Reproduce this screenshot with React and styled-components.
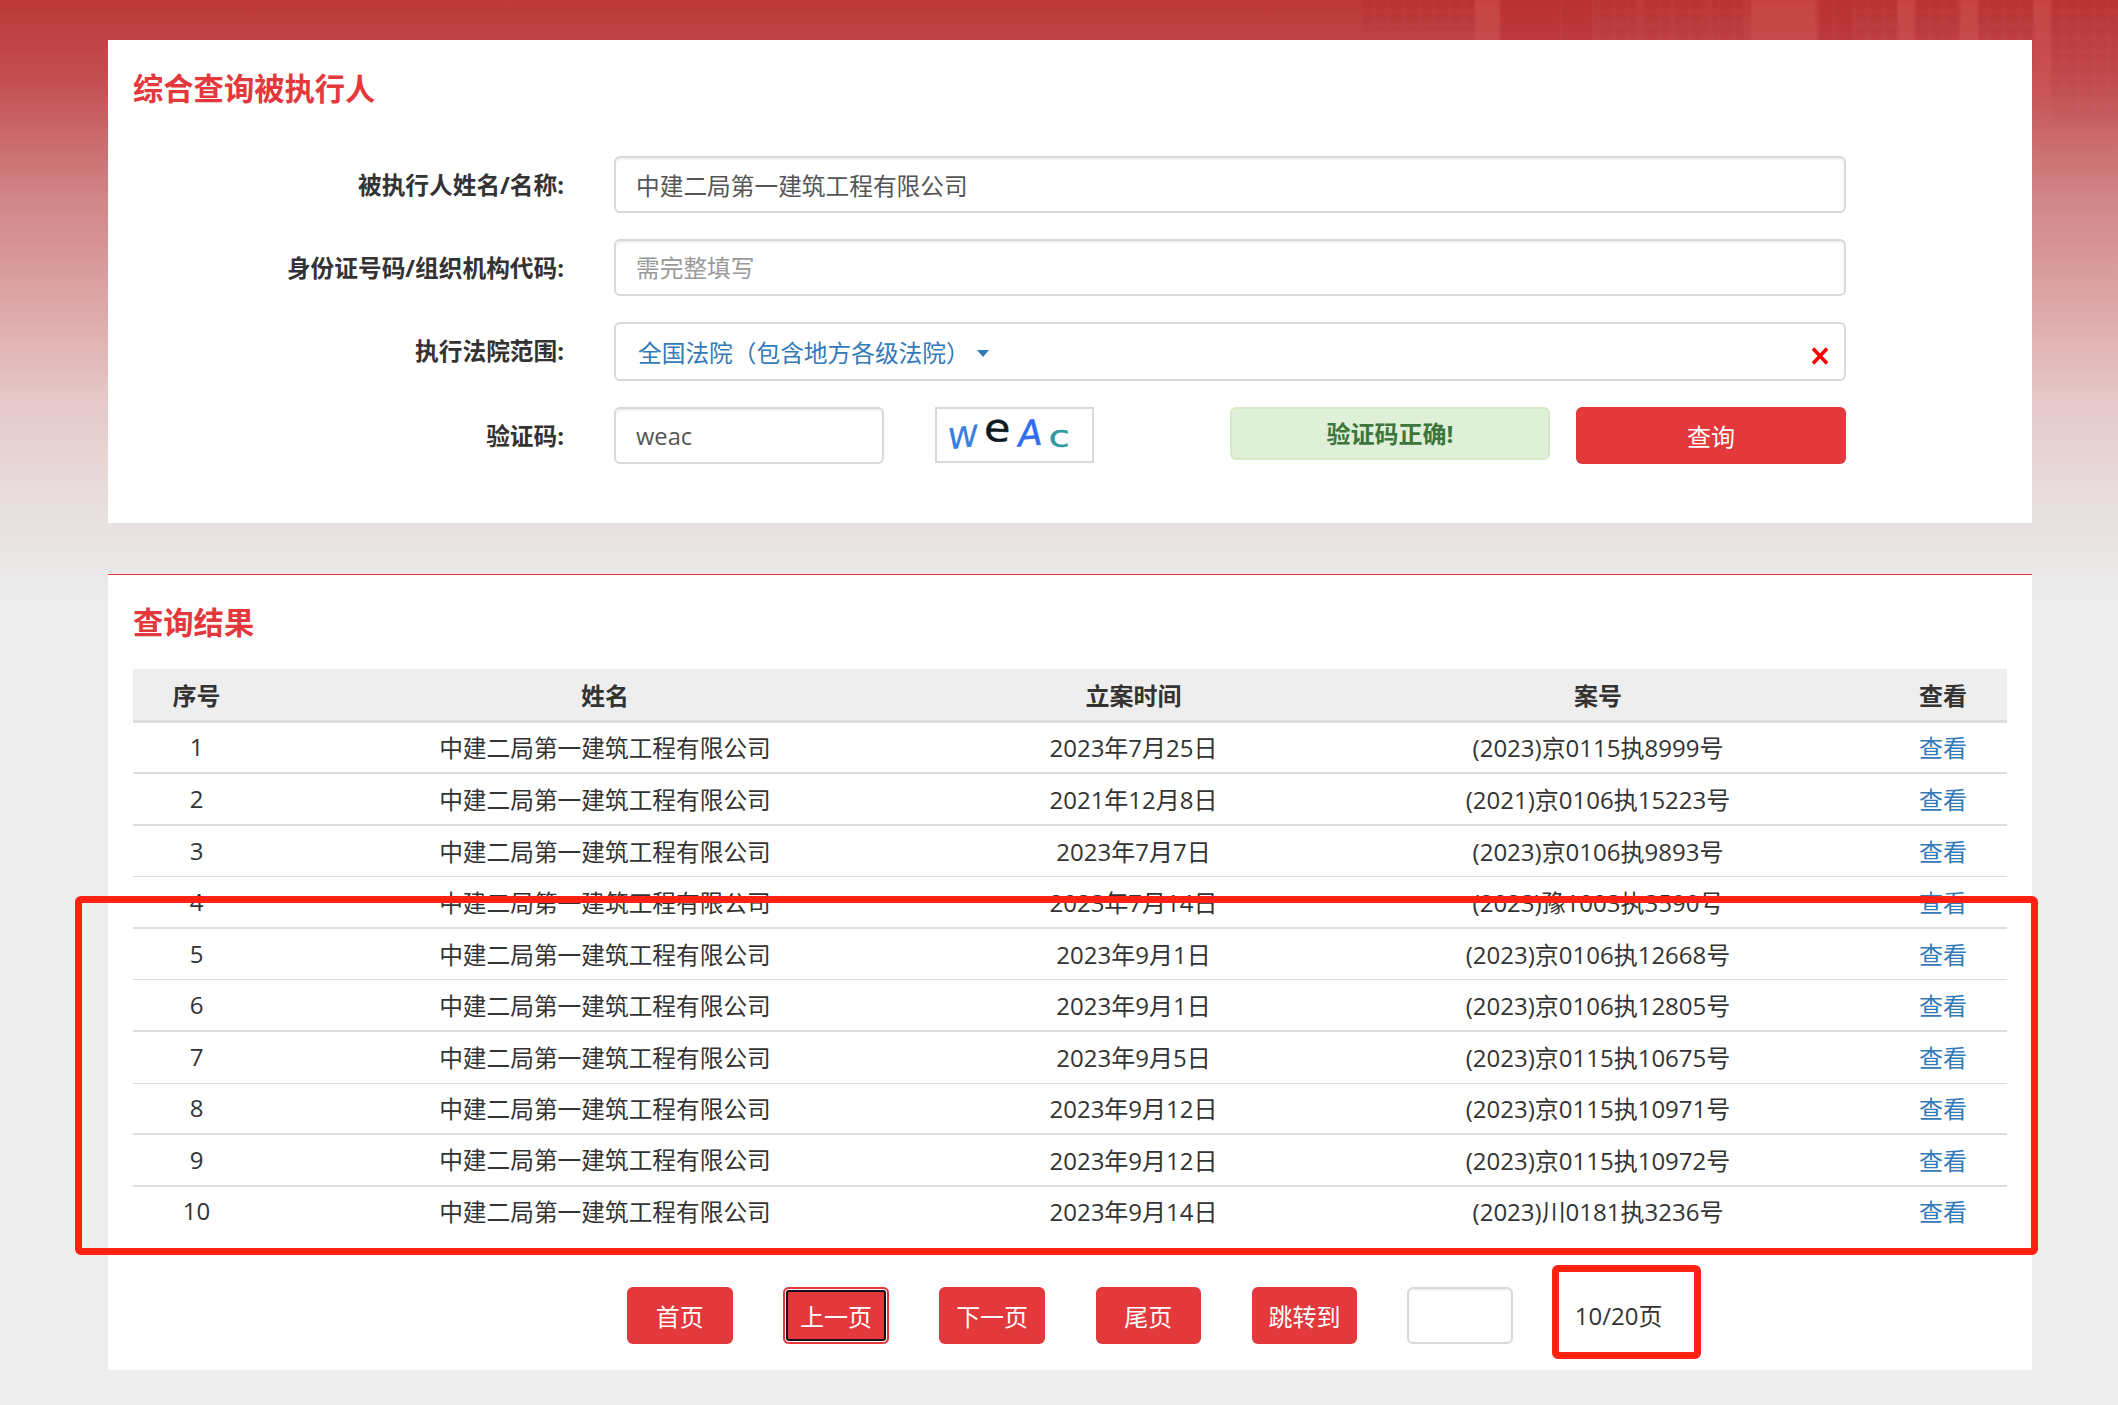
import React from "react";
import styled, { createGlobalStyle } from "styled-components";

const GlobalStyle = createGlobalStyle`
  html, body {
    margin: 0;
    padding: 0;
    background: #ededed;
  }
  * {
    box-sizing: border-box;
  }
`;

const Page = styled.div`
  position: relative;
  width: 2118px;
  height: 1405px;
  padding: 40px 86px 0 108px;
  overflow: hidden;
  font-family: "Open Sans", "Noto Sans CJK SC", sans-serif;
  font-size: 24px;
  color: #333;
  background: linear-gradient(
    180deg,
    #bd383a 0,
    #c44f51 80px,
    #d18689 200px,
    #dda5a6 300px,
    #e6c8c9 400px,
    #e8dddd 500px,
    #ececec 600px,
    #ededed 700px
  );
`;

const Building = styled.svg`
  position: absolute;
  top: 0;
  left: 1300px;
  filter: blur(1px);
`;

const Panel = styled.section`
  position: relative;
  width: 1924px;
  background: #fff;
`;

const SearchPanel = styled(Panel)`
  height: 483px;
  padding: 29px 25px 0;
`;

const ResultPanel = styled(Panel)`
  margin-top: 51px;
  height: 796px;
  padding: 28px 25px 0;
  border-top: 1px solid #e4393c;
`;

const Title = styled.h2`
  margin: 0;
  font-size: 30.3px;
  line-height: 40px;
  font-weight: 700;
  color: #e4393c;
`;

const Form = styled.div`
  display: flex;
  flex-direction: column;
  gap: 26px;
  margin-top: 47px;
`;

const FormRow = styled.div`
  display: grid;
  grid-template-columns: 431px 1232px;
  column-gap: 50px;
  align-items: start;
`;

const Label = styled.label`
  height: 57px;
  line-height: 59px;
  text-align: right;
  font-size: 23.7px;
  font-weight: 700;
  color: #333;
`;

const Input = styled.input`
  display: block;
  width: ${(p) => p.$width || "100%"};
  height: 57px;
  padding: 0 20px;
  border: 2px solid #d9d9d9;
  border-radius: 6px;
  background: #fff;
  box-shadow: inset 0 2px 2px rgba(0, 0, 0, 0.06);
  outline: none;
  font: inherit;
  font-size: 23.7px;
  color: #555;
  &::placeholder {
    color: #999;
    opacity: 1;
  }
`;

const SelectBox = styled.div`
  display: flex;
  align-items: center;
  height: 59px;
  padding: 1px 15px 0 22px;
  border: 2px solid #d9d9d9;
  border-radius: 6px;
  font-size: 23.7px;
  color: #337ab7;
`;

const Caret = styled.span`
  width: 0;
  height: 0;
  margin-left: 7px;
  margin-top: 3px;
  border-left: 6px solid transparent;
  border-right: 6px solid transparent;
  border-top: 7px solid #337ab7;
`;

const ClearIcon = styled.svg`
  margin-left: auto;
  margin-top: 7px;
`;

const CaptchaRow = styled.div`
  display: flex;
  align-items: flex-start;
`;

const Captcha = styled.svg`
  flex: none;
  margin-left: 51px;
  border: 2px solid #d9d9d9;
`;

const CaptchaLetter = styled.text`
  font-family: "DejaVu Sans", sans-serif;
  font-style: ${(p) => (p.$italic ? "italic" : "normal")};
  font-size: ${(p) => p.$size}px;
  fill: ${(p) => p.$color};
  stroke: ${(p) => p.$color};
  stroke-width: ${(p) => p.$weight || 0}px;
`;

const CaptchaOk = styled.div`
  flex: none;
  width: 320px;
  height: 53px;
  margin-left: 136px;
  border: 2px solid #d6e9c6;
  border-radius: 6px;
  background: #dff0d8;
  color: #3c763d;
  font-weight: 700;
  line-height: 49px;
  text-align: center;
`;

const RedButton = styled.button`
  flex: none;
  width: ${(p) => p.$width || "105.5px"};
  height: 57px;
  margin-left: ${(p) => p.$gap || "0"};
  padding: 0;
  border: 0;
  border-radius: 6px;
  background: #e4393c;
  color: #fff;
  font: inherit;
  box-shadow: ${(p) =>
    p.$focused
      ? "inset 0 0 0 2px #e4393c, inset 0 0 0 3px #fff, inset 0 0 0 5px #111"
      : "none"};
`;

const Table = styled.div`
  margin-top: 26px;
  width: 1874px;
`;

const columns = "127px 690px 367px 562px 128px";

const HeadRow = styled.div`
  display: grid;
  grid-template-columns: ${columns};
  align-items: center;
  height: 53.7px;
  padding-top: 1px;
  background: #eee;
  border-bottom: 3px solid #ddd;
  font-weight: 700;
  text-align: center;
`;

const BodyRow = styled.div`
  display: grid;
  grid-template-columns: ${columns};
  align-items: center;
  height: 51.55px;
  padding-bottom: 1px;
  text-align: center;
  border-bottom: ${(p) => (p.$thin ? "1px" : "2px")} solid
    ${(p) => (p.$last ? "transparent" : "#ddd")};
`;

const CompanyCell = styled.span`
  font-size: 23.7px;
`;

const ViewLink = styled.a`
  color: #337ab7;
  text-decoration: none;
`;

const Pager = styled.div`
  display: flex;
  align-items: center;
  margin-top: 49px;
  padding-left: 494px;
`;

const PageInput = styled(Input)`
  flex: none;
  margin-left: 49.5px;
  padding: 0 6px;
`;

const PageStatus = styled.span`
  margin-left: 62px;
  padding-bottom: 2px;
`;

const Annotation = styled.div`
  position: absolute;
  top: ${(p) => p.$top}px;
  left: ${(p) => p.$left}px;
  width: ${(p) => p.$width}px;
  height: ${(p) => p.$height}px;
  border: 7px solid #ff2212;
  border-radius: 6px;
  pointer-events: none;
`;

const company = "中建二局第一建筑工程有限公司";

const rows = [
  ["1", "2023年7月25日", "(2023)京0115执8999号"],
  ["2", "2021年12月8日", "(2021)京0106执15223号"],
  ["3", "2023年7月7日", "(2023)京0106执9893号"],
  ["4", "2023年7月14日", "(2023)豫1003执3590号"],
  ["5", "2023年9月1日", "(2023)京0106执12668号"],
  ["6", "2023年9月1日", "(2023)京0106执12805号"],
  ["7", "2023年9月5日", "(2023)京0115执10675号"],
  ["8", "2023年9月12日", "(2023)京0115执10971号"],
  ["9", "2023年9月12日", "(2023)京0115执10972号"],
  ["10", "2023年9月14日", "(2023)川0181执3236号"],
];

const pageButtons = ["首页", "上一页", "下一页", "尾页", "跳转到"];

// window blocks and wall bands of the faded building photo, x relative to the svg
const windowBands = [
  [63, 112, 30],
  [295, 41, 42],
  [344, 26, 42],
  [375, 32, 42],
  [412, 31, 42],
  [555, 42, 42],
  [615, 45, 42],
  [678, 55, 42],
  [751, 67, 130],
];
const darkBands = [
  [200, 60, 42],
  [262, 30, 42],
  [519, 14, 42],
  [535, 18, 42],
];
const lightBands = [
  [175, 25, 42],
  [451, 65, 42],
  [597, 18, 42],
  [660, 18, 42],
  [733, 18, 130],
];

const BuildingPhoto = () => (
  <Building width="818" height="130" viewBox="0 0 818 130">
    <defs>
      <pattern id="panes" width="15" height="13" patternUnits="userSpaceOnUse">
        <rect width="13" height="11" fill="#a81e22" fillOpacity="0.18" />
      </pattern>
      <linearGradient id="fade" x1="0" y1="0" x2="0" y2="1">
        <stop offset="0" stopColor="#fff" />
        <stop offset="0.7" stopColor="#fff" stopOpacity="0.5" />
        <stop offset="1" stopColor="#fff" stopOpacity="0.05" />
      </linearGradient>
      <mask id="fadeMask">
        <rect width="818" height="130" fill="url(#fade)" />
      </mask>
    </defs>
    <g mask="url(#fadeMask)">
      {windowBands.map(([x, w, h]) => (
        <rect key={x} x={x} y="0" width={w} height={h} fill="url(#panes)" />
      ))}
      {darkBands.map(([x, w, h]) => (
        <rect key={x} x={x} y="0" width={w} height={h} fill="#b3262a" fillOpacity="0.4" />
      ))}
      {lightBands.map(([x, w, h]) => (
        <rect key={x} x={x} y="0" width={w} height={h} fill="#e0615f" fillOpacity="0.3" />
      ))}
    </g>
  </Building>
);

const CaptchaImage = () => (
  <Captcha width="159" height="56" viewBox="0 0 159 56">
    <CaptchaLetter $italic $size={42} $color="#3a80e0" transform="translate(9 44) rotate(-8)">
      w
    </CaptchaLetter>
    <CaptchaLetter $size={46} $color="#101820" $weight={0.6} transform="translate(46 34) rotate(3) scale(1 0.9)">
      e
    </CaptchaLetter>
    <CaptchaLetter $italic $size={38} $color="#2f6cf0" $weight={0.6} transform="translate(84 40) rotate(-4)">
      A
    </CaptchaLetter>
    <CaptchaLetter $size={38} $color="#2f9aa0" $weight={0.4} transform="translate(116 41) scale(1.1 0.85)">
      c
    </CaptchaLetter>
  </Captcha>
);

export default function App() {
  return (
    <Page>
      <GlobalStyle />
      <BuildingPhoto />
      <SearchPanel>
        <Title>综合查询被执行人</Title>
        <Form>
          <FormRow>
            <Label>被执行人姓名/名称:</Label>
            <Input defaultValue={company} />
          </FormRow>
          <FormRow>
            <Label>身份证号码/组织机构代码:</Label>
            <Input placeholder="需完整填写" />
          </FormRow>
          <FormRow>
            <Label>执行法院范围:</Label>
            <SelectBox>
              全国法院（包含地方各级法院）
              <Caret />
              <ClearIcon width="18" height="18" viewBox="0 0 18 18">
                <path d="M2 1.5 L16 16.5 M16 1.5 L2 16.5" stroke="#f00" strokeWidth="3.5" />
              </ClearIcon>
            </SelectBox>
          </FormRow>
          <FormRow>
            <Label>验证码:</Label>
            <CaptchaRow>
              <Input $width="270px" defaultValue="weac" />
              <CaptchaImage />
              <CaptchaOk>验证码正确!</CaptchaOk>
              <RedButton $width="270px" $gap="26px">
                查询
              </RedButton>
            </CaptchaRow>
          </FormRow>
        </Form>
      </SearchPanel>
      <ResultPanel>
        <Title>查询结果</Title>
        <Table>
          <HeadRow>
            <span>序号</span>
            <span>姓名</span>
            <span>立案时间</span>
            <span>案号</span>
            <span>查看</span>
          </HeadRow>
          {rows.map(([no, date, code], i) => (
            <BodyRow key={no} $thin={i === 2 || i === 4 || i === 6} $last={i === rows.length - 1}>
              <span>{no}</span>
              <CompanyCell>{company}</CompanyCell>
              <span>{date}</span>
              <span>{code}</span>
              <ViewLink href="#">查看</ViewLink>
            </BodyRow>
          ))}
        </Table>
        <Pager>
          {pageButtons.map((label, i) => (
            <RedButton key={label} $gap={i ? "50.7px" : "0"} $focused={i === 1}>
              {label}
            </RedButton>
          ))}
          <PageInput $width="106px" />
          <PageStatus>10/20页</PageStatus>
        </Pager>
      </ResultPanel>
      <Annotation $top={896} $left={75} $width={1963} $height={359} />
      <Annotation $top={1265} $left={1552} $width={149} $height={94} />
    </Page>
  );
}
